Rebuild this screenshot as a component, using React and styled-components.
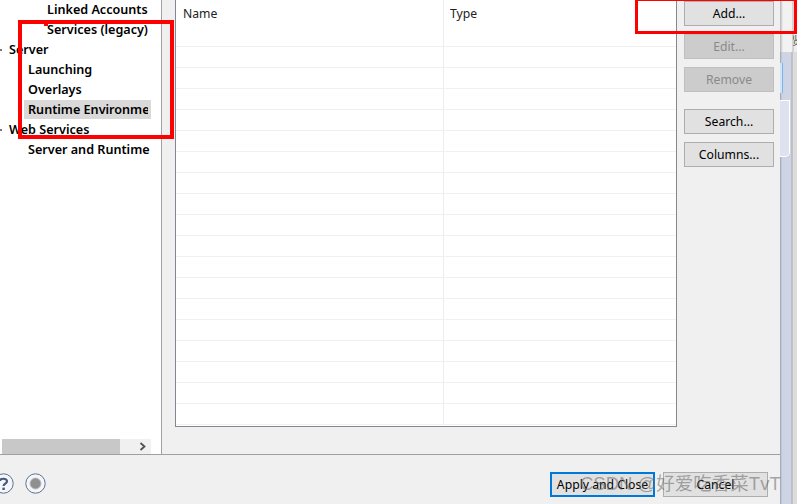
import React from "react"
import styled, { createGlobalStyle } from "styled-components"

const GlobalStyle = createGlobalStyle`
  html, body {
    margin: 0;
    padding: 0;
    width: 797px;
    height: 504px;
    overflow: hidden;
    background: #f0f0f0;
    font-family: "Noto Sans", "Open Sans", sans-serif;
  }
`

const Screen = styled.div`
  position: relative;
  display: flex;
  width: 797px;
  height: 504px;
  overflow: hidden;
`

const Dialog = styled.div`
  display: flex;
  flex-direction: column;
  flex: none;
  width: 780px;
  height: 504px;
  background: #f0f0f0;
`

const Main = styled.div`
  display: flex;
  flex: none;
  height: 455px;
  border-bottom: 1px solid #a0a0a0;
  box-sizing: border-box;
`

const Sidebar = styled.div`
  display: flex;
  flex: none;
  flex-direction: column;
  justify-content: space-between;
  width: 161px;
  background: #fff;
  border-right: 1px solid #a0a0a0;
`

const Tree = styled.ul`
  list-style: none;
  margin: 0;
  padding: 0;
  width: 151px;
  overflow: hidden;
`

const TreeRow = styled.li`
  position: relative;
  height: 20px;
  line-height: 19px;
  font-size: 12.6px;
  font-weight: 600;
  color: #000;
  white-space: nowrap;
  padding-left: ${p => 9 + p.$level * 19}px;

  ${p =>
    p.$twisty &&
    `&:before {
      content: "";
      position: absolute;
      left: 0;
      top: 9px;
      width: 2px;
      height: 2px;
      background: #777;
    }`}
`

const Selected = styled.span`
  display: block;
  box-sizing: border-box;
  margin-left: -4px;
  padding-left: 4px;
  overflow: hidden;
  background: #d9d9d9;
  border-right: 3px solid #d9d9d9;
`

const HScroll = styled.div`
  display: flex;
  align-items: center;
  justify-content: flex-end;
  width: 149px;
  height: 15px;
  margin: 0 0 0 2px;
  background: #f0f0f0;
  color: #505050;
  position: relative;
`

const HThumb = styled.div`
  flex: none;
  width: 118px;
  height: 15px;
  margin-right: auto;
  background: #c8c8c8;
`

const Content = styled.div`
  flex: 1;
  display: flex;
  padding-left: 13px;
  padding-right: 6px;
`

const Table = styled.div`
  width: 502px;
  height: 427px;
  flex: none;
  box-sizing: border-box;
  background: #fff;
  border: 1px solid #828790;
  border-top: 0;
  display: flex;
  flex-direction: column;
  overflow: hidden;
`

const HeaderRow = styled.div`
  display: grid;
  grid-template-columns: 267px 1fr;
  height: 47px;
  flex: none;
  border-bottom: 1px solid #f0f0f0;
  box-sizing: border-box;
`

const HeaderCell = styled.div`
  padding: 5px 0 0 ${p => (p.$divider ? 6 : 7)}px;
  font-size: 12.2px;
  line-height: 18px;
  color: #222;
  ${p => p.$divider && "border-left: 1px solid #ededed;"}
`

const BodyRow = styled.div`
  display: grid;
  grid-template-columns: 267px 1fr;
  height: 21px;
  flex: none;
  box-sizing: border-box;
  border-bottom: 1px solid #f0f0f0;
`

const BodyCell = styled.div`
  ${p => p.$divider && "border-left: 1px solid #ededed;"}
`

const ButtonColumn = styled.div`
  display: flex;
  flex-direction: column;
  width: 90px;
  margin-left: 7px;
  padding-top: 1px;
`

const SideButton = styled.button`
  width: 90px;
  height: 25px;
  margin-top: ${p => p.$gap}px;
  padding: 0;
  font-family: inherit;
  font-size: 12.2px;
  color: ${p => (p.disabled ? "#8a8a8a" : "#000")};
  background: ${p => (p.disabled ? "#cccccc" : "#e1e1e1")};
  border: 1px solid ${p => (p.disabled ? "#bfbfbf" : "#adadad")};
`

const Footer = styled.div`
  flex: 1;
  display: flex;
  align-items: flex-start;
`

const HelpIcons = styled.div`
  display: flex;
  gap: 11px;
  margin-left: -7px;
  margin-top: 18px;
`

const Actions = styled.div`
  display: flex;
  gap: 8px;
  margin-left: auto;
  margin-right: 12px;
  margin-top: 17px;
`

const FooterButton = styled.button`
  width: 105px;
  height: 25px;
  box-sizing: border-box;
  padding: 0;
  font-family: inherit;
  font-size: 12.2px;
  color: #000;
  background: #e1e1e1;
  border: ${p => (p.$focused ? "2px solid #0078d7" : "1px solid #adadad")};
`

const Backdrop = styled.div`
  position: relative;
  flex: none;
  width: 17px;
  height: 504px;
  overflow: hidden;
  background: linear-gradient(90deg, #9aa0ae 0, #ccd3e4 2px, #d0d6e6 11px, #a8a8a8 12px, #dcdcdc 13px);
`

const BackdropPatch = styled.div`
  position: absolute;
  left: 0;
  top: 0;
  width: 17px;
  height: 52px;
  background: linear-gradient(90deg, #b5b5b5 0, #f2f2f2 3px, #f2f2f2 12px, #b8b8b8 13px, #eee 14px);
`

const BackdropGlyph = styled.span`
  position: absolute;
  left: 12px;
  top: 33px;
  font-family: "Noto Sans CJK SC", sans-serif;
  font-size: 11px;
  line-height: 14px;
  color: #555;
`

const BlueBox = styled.div`
  position: absolute;
  left: 0;
  top: 63px;
  width: 3px;
  height: 30px;
  background: #cfe4f7;
  border-right: 1px solid #7eb4ea;
  box-sizing: border-box;
`

const RoundBox = styled.div`
  position: absolute;
  left: 0;
  top: 100px;
  width: 10px;
  height: 57px;
  box-sizing: border-box;
  background: #dde2ee;
  border: 1px solid #fff;
  border-left: 0;
  border-radius: 0 0 5px 0;
`

const RedBox = styled.div`
  position: absolute;
  left: ${p => p.$x}px;
  top: ${p => p.$y}px;
  width: ${p => p.$w}px;
  height: ${p => p.$h}px;
  box-sizing: border-box;
  border: ${p => p.$t}px solid #ff0000;
  pointer-events: none;
`

const RedDot = styled.div`
  position: absolute;
  left: 44px;
  top: 22px;
  width: 4px;
  height: 4px;
  background: #ff0000;
`

const Watermark = styled.div`
  position: absolute;
  left: 580px;
  top: 471px;
  font-family: "Liberation Sans", "Noto Sans CJK SC", sans-serif;
  font-size: 18.5px;
  line-height: 26px;
  color: rgba(100, 100, 100, 0.55);
  white-space: nowrap;
  pointer-events: none;
`

const HelpIcon = () => (
  <svg width="21" height="21" viewBox="0 0 21 21">
    <circle cx="10.5" cy="10.5" r="9.7" fill="#f4f6fa" stroke="#5a7196" strokeWidth="1" />
    <path
      d="M7 8 C7 5.2 14 4.8 14 8.2 C14 10.6 10.6 10.6 10.6 13"
      fill="none"
      stroke="#44597c"
      strokeWidth="2.2"
    />
    <rect x="9.4" y="14.6" width="2.4" height="2.4" fill="#44597c" />
  </svg>
)

const RecordIcon = () => (
  <svg width="21" height="21" viewBox="0 0 21 21">
    <circle cx="10.5" cy="10.5" r="9.7" fill="#f4f6fa" stroke="#5a7196" strokeWidth="1" />
    <circle cx="10.5" cy="10.5" r="5.4" fill="#8f8f8f" stroke="#b5b5b5" strokeWidth="1" />
  </svg>
)

const treeItems = [
  { label: "Linked Accounts", level: 2 },
  { label: "Services (legacy)", level: 2 },
  { label: "Server", level: 0, twisty: true },
  { label: "Launching", level: 1 },
  { label: "Overlays", level: 1 },
  { label: "Runtime Environment", level: 1, selected: true },
  { label: "Web Services", level: 0, twisty: true },
  { label: "Server and Runtime", level: 1 },
]

const sideButtons = [
  { label: "Add...", gap: 0 },
  { label: "Edit...", gap: 8, disabled: true },
  { label: "Remove", gap: 8, disabled: true },
  { label: "Search...", gap: 17 },
  { label: "Columns...", gap: 8 },
]

const rows = Array.from({ length: 18 }, (_, i) => i)

const App = () => (
  <>
    <GlobalStyle />
    <Screen>
      <Dialog>
        <Main>
          <Sidebar>
            <Tree>
              {treeItems.map(item => (
                <TreeRow key={item.label} $level={item.level} $twisty={item.twisty}>
                  {item.selected ? <Selected>{item.label}</Selected> : item.label}
                </TreeRow>
              ))}
            </Tree>
            <HScroll>
              <HThumb />
              <svg width="8" height="9" viewBox="0 0 8 9" style={{ marginRight: 4 }}>
                <path d="M1.5 1 L5.5 4.5 L1.5 8" fill="none" stroke="#505050" strokeWidth="1.8" />
              </svg>
            </HScroll>
          </Sidebar>
          <Content>
            <Table>
              <HeaderRow>
                <HeaderCell>Name</HeaderCell>
                <HeaderCell $divider>Type</HeaderCell>
              </HeaderRow>
              {rows.map(i => (
                <BodyRow key={i}>
                  <BodyCell />
                  <BodyCell $divider />
                </BodyRow>
              ))}
            </Table>
            <ButtonColumn>
              {sideButtons.map(b => (
                <SideButton key={b.label} $gap={b.gap} disabled={b.disabled}>
                  {b.label}
                </SideButton>
              ))}
            </ButtonColumn>
          </Content>
        </Main>
        <Footer>
          <HelpIcons>
            <HelpIcon />
            <RecordIcon />
          </HelpIcons>
          <Actions>
            <FooterButton $focused>Apply and Close</FooterButton>
            <FooterButton>Cancel</FooterButton>
          </Actions>
        </Footer>
      </Dialog>
      <Backdrop>
        <BackdropPatch />
        <BackdropGlyph>贤</BackdropGlyph>
        <BlueBox />
        <RoundBox />
      </Backdrop>
      <RedBox $x={18} $y={20} $w={156} $h={119} $t={4} />
      <RedDot />
      <RedBox $x={635} $y={-2} $w={162} $h={36} $t={3} />
      <Watermark>CSDN @好爱吃香菜TvT</Watermark>
    </Screen>
  </>
)

export default App
